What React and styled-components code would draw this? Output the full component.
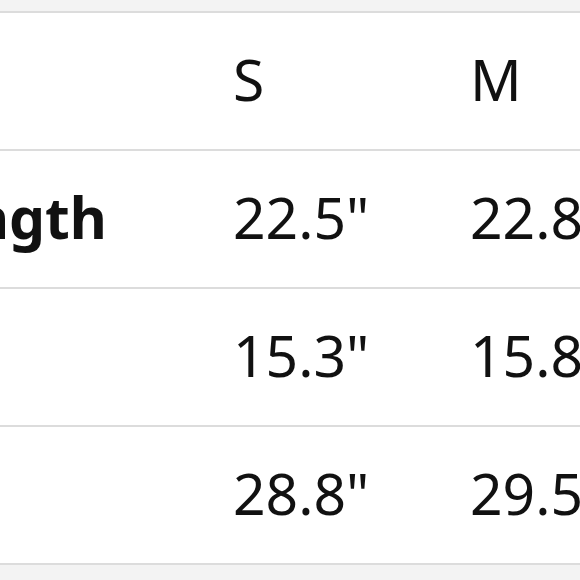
import React from "react";
import styled, { createGlobalStyle } from "styled-components";

const Global = createGlobalStyle`
  html, body { margin: 0; padding: 0; background: #f3f3f3; }
  body { font-family: "Noto Sans", "Open Sans", sans-serif; color: #111; }
`;

const Viewport = styled.div`
  width: 580px;
  height: 580px;
  overflow: hidden;
  background: #f3f3f3;
  padding-top: 11px;
  box-sizing: border-box;
`;

const Table = styled.div`
  margin-left: -94px;
  width: 1200px;
  background: #fff;
  border-top: 2px solid #dcdcdc;
`;

const Row = styled.div`
  display: grid;
  grid-template-columns: 327px 237px 237px 237px;
  height: 136px;
  border-bottom: 2px solid #dcdcdc;
  align-items: center;
`;

const Cell = styled.div`
  font-size: 57px;
  line-height: 1;
  font-weight: ${(p) => (p.$label ? 700 : 400)};
  white-space: nowrap;
  color: #111;
  padding-bottom: 3px;
`;

const sizes = ["S", "M", "L"];
const rows = [
  { label: "Length", values: ['22.5"', '22.8"', '23.2"'] },
  { label: "", values: ['15.3"', '15.8"', '16.3"'] },
  { label: "", values: ['28.8"', '29.5"', '30.2"'] },
];

export default function App() {
  return (
    <>
      <Global />
      <Viewport>
        <Table>
          <Row>
            <Cell $label />
            {sizes.map((s) => (
              <Cell key={s}>{s}</Cell>
            ))}
          </Row>
          {rows.map((r, i) => (
            <Row key={i}>
              <Cell $label>{r.label}</Cell>
              {r.values.map((v, j) => (
                <Cell key={j}>{v}</Cell>
              ))}
            </Row>
          ))}
        </Table>
      </Viewport>
    </>
  );
}
